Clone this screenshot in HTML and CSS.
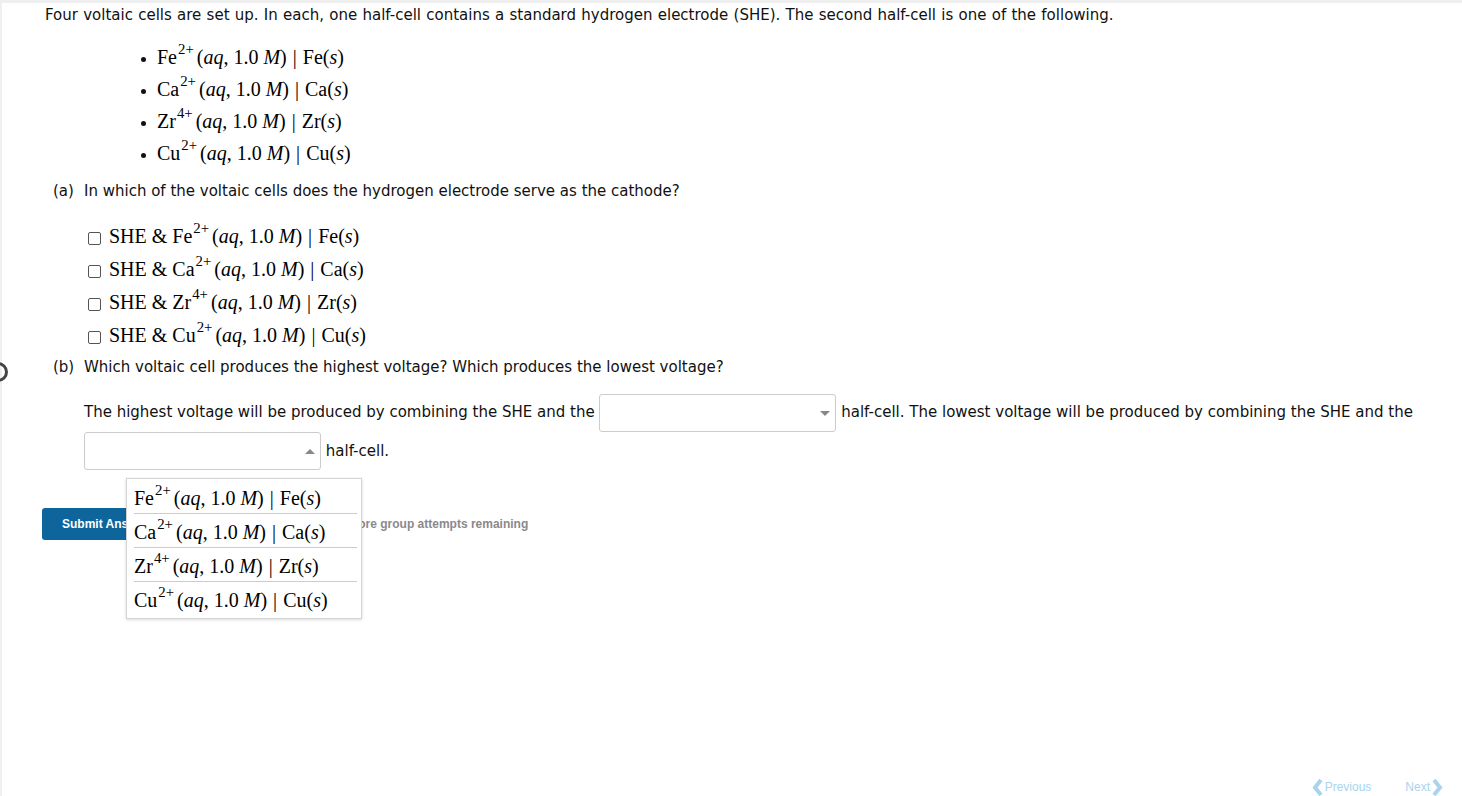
FILE: index.html
```html
<!DOCTYPE html>
<html lang="en">

<head>
    <meta charset="UTF-8">
    <meta name="viewport" content="width=device-width, initial-scale=1.0">
    <title>Voltaic cells</title>
    <link rel="stylesheet" href="styles.css">
</head>

<body>
    <div class="edge-ring"></div>
    <div class="page">
        <p class="intro">Four voltaic cells are set up. In each, one half-cell contains a standard hydrogen electrode (SHE). The second half-cell is one of the following.</p>

        <ul class="cells">
            <li><span class="m">Fe<sup>2+</sup>(<i>aq</i>, 1.0 <i>M</i>)<span class="bar">|</span>Fe(<i>s</i>)</span></li>
            <li><span class="m">Ca<sup>2+</sup>(<i>aq</i>, 1.0 <i>M</i>)<span class="bar">|</span>Ca(<i>s</i>)</span></li>
            <li><span class="m">Zr<sup>4+</sup>(<i>aq</i>, 1.0 <i>M</i>)<span class="bar">|</span>Zr(<i>s</i>)</span></li>
            <li><span class="m">Cu<sup>2+</sup>(<i>aq</i>, 1.0 <i>M</i>)<span class="bar">|</span>Cu(<i>s</i>)</span></li>
        </ul>

        <p class="part"><span class="tag">(a)</span>In which of the voltaic cells does the hydrogen electrode serve as the cathode?</p>

        <div class="choices">
            <label class="choice"><span class="box"></span><span class="m">SHE &amp; Fe<sup>2+</sup>(<i>aq</i>, 1.0 <i>M</i>)<span class="bar">|</span>Fe(<i>s</i>)</span></label>
            <label class="choice"><span class="box"></span><span class="m">SHE &amp; Ca<sup>2+</sup>(<i>aq</i>, 1.0 <i>M</i>)<span class="bar">|</span>Ca(<i>s</i>)</span></label>
            <label class="choice"><span class="box"></span><span class="m">SHE &amp; Zr<sup>4+</sup>(<i>aq</i>, 1.0 <i>M</i>)<span class="bar">|</span>Zr(<i>s</i>)</span></label>
            <label class="choice"><span class="box"></span><span class="m">SHE &amp; Cu<sup>2+</sup>(<i>aq</i>, 1.0 <i>M</i>)<span class="bar">|</span>Cu(<i>s</i>)</span></label>
        </div>

        <p class="part"><span class="tag">(b)</span>Which voltaic cell produces the highest voltage? Which produces the lowest voltage?</p>

        <p class="answer">The highest voltage will be produced by combining the SHE and the
            <span class="select"><span class="arrow down"></span></span>
            half-cell. The lowest voltage will be produced by combining the SHE and the
            <span class="select-wrap"><span class="select"><span class="arrow up"></span></span><span class="menu">
                    <span class="option"><span class="m">Fe<sup>2+</sup>(<i>aq</i>, 1.0 <i>M</i>)<span class="bar">|</span>Fe(<i>s</i>)</span></span>
                    <span class="option"><span class="m">Ca<sup>2+</sup>(<i>aq</i>, 1.0 <i>M</i>)<span class="bar">|</span>Ca(<i>s</i>)</span></span>
                    <span class="option"><span class="m">Zr<sup>4+</sup>(<i>aq</i>, 1.0 <i>M</i>)<span class="bar">|</span>Zr(<i>s</i>)</span></span>
                    <span class="option"><span class="m">Cu<sup>2+</sup>(<i>aq</i>, 1.0 <i>M</i>)<span class="bar">|</span>Cu(<i>s</i>)</span></span>
                </span></span>
            half-cell.</p>

        <div class="submit-row">
            <button class="submit">Submit Answer</button>
            <span class="attempts">10 more group attempts remaining</span>
        </div>

        <div class="pager">
            <span class="nav"><svg width="11" height="19" viewBox="0 0 11 19"><path d="M9 2 L3 9.5 L9 17" fill="none" stroke="#a9d4ee" stroke-width="4"/></svg>Previous</span>
            <span class="nav">Next<svg width="11" height="19" viewBox="0 0 11 19"><path d="M2 2 L8 9.5 L2 17" fill="none" stroke="#a9d4ee" stroke-width="4"/></svg></span>
        </div>
    </div>
</body>

</html>
```

FILE: styles.css
```css
html,
body {
    margin: 0;
    padding: 0;
}

body {
    background-color: #efefef;
    font-family: "DejaVu Sans", Verdana, sans-serif;
    font-size: 15px;
    color: #111;
    overflow: hidden;
}

.page {
    position: relative;
    margin: 3px 0 0 2px;
    padding: 2px 0 0 40px;
    height: calc(100vh - 5px);
    background-color: #fff;
    display: flex;
    flex-direction: column;
}

.edge-ring {
    position: absolute;
    left: -12px;
    top: 362px;
    width: 14px;
    height: 14px;
    border: 3px solid #444;
    border-radius: 50%;
    filter: blur(0.6px);
    z-index: 2;
}

p {
    margin: 0;
}

.intro {
    line-height: 20px;
    margin-left: 3px;
    word-spacing: 0.5px;
}

.m {
    font-family: "Liberation Serif", "DejaVu Serif", serif;
    font-size: 20px;
    color: #000;
    white-space: nowrap;
}

.m sup {
    font-size: 0.74em;
    line-height: 0;
    vertical-align: 0.66em;
    margin-left: 1px;
    margin-right: 3px;
}

.bar {
    margin: 0 0.3em;
}

.cells {
    margin: 16px 0 0 0;
    padding: 0 0 0 115px;
}

.cells li {
    line-height: 32px;
    height: 32px;
}

.part {
    margin-top: 12px;
    margin-left: 11px;
    line-height: 20px;
}

.tag {
    display: inline-block;
    width: 31px;
}

.choices {
    margin: 19px 0 0 46px;
    display: flex;
    flex-direction: column;
}

.choice {
    display: flex;
    align-items: center;
    height: 33px;
}

.box {
    width: 11px;
    height: 11px;
    border: 1px solid #555;
    border-radius: 2px;
    margin-right: 8px;
    margin-top: 3px;
}

.choices + .part {
    margin-top: 5px;
}

.answer {
    margin: 16px 0 0 42px;
    line-height: 38px;
}

.select-wrap {
    position: relative;
    display: inline-block;
    vertical-align: middle;
}

.select {
    position: relative;
    display: inline-block;
    box-sizing: border-box;
    width: 237px;
    height: 38px;
    border: 1px solid #ccc;
    border-radius: 3px;
    background-color: #fff;
    vertical-align: middle;
}

.select-wrap .select {
    display: block;
}

.arrow {
    position: absolute;
    right: 5px;
    top: 16px;
    width: 0;
    height: 0;
    border-left: 5px solid transparent;
    border-right: 5px solid transparent;
}

.arrow.down {
    border-top: 5px solid #888;
}

.arrow.up {
    border-bottom: 5px solid #888;
}

.menu {
    position: absolute;
    left: 42px;
    top: 46px;
    width: 236px;
    box-sizing: border-box;
    padding: 1px 4px 2px 7px;
    background-color: #fff;
    border: 1px solid #d4d4d4;
    box-shadow: 0 1px 3px rgba(0, 0, 0, 0.15);
    display: flex;
    flex-direction: column;
    z-index: 3;
    line-height: normal;
}

.option {
    height: 34px;
    line-height: 36px;
    border-bottom: 1px solid #ccc;
    box-sizing: border-box;
}

.option:last-child {
    border-bottom: none;
}

.submit-row {
    margin-top: 38px;
    display: flex;
    align-items: center;
}

.submit {
    height: 32px;
    padding: 0 20px;
    border: none;
    border-radius: 3px;
    background-color: #0e659c;
    color: #fff;
    font-family: "Liberation Sans", Arial, sans-serif;
    font-weight: bold;
    font-size: 12px;
}

.attempts {
    margin-left: 162px;
    font-family: "Liberation Sans", Arial, sans-serif;
    font-weight: bold;
    font-size: 12px;
    color: #8a8a8a;
}

.pager {
    margin-top: auto;
    display: flex;
    justify-content: flex-end;
    gap: 34px;
    padding-right: 19px;
    height: 18px;
}

.nav {
    display: flex;
    align-items: center;
    gap: 2px;
    font-family: "Liberation Sans", Arial, sans-serif;
    font-size: 12px;
    color: #a9d4ee;
}
```
